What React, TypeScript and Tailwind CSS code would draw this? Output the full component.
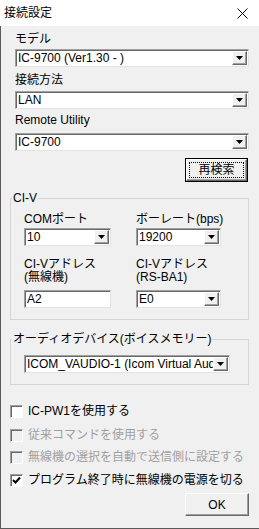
import React from 'react';

// Sunken combo box with a small raised drop button on the right
function DropBtn() {
  return (
    <div className="w-[15px] h-[14px] mr-[1px] flex items-center justify-center bg-[#f0f0f0] border border-t-white border-l-white border-r-[#696969] border-b-[#696969] shadow-[inset_-1px_-1px_0_#a0a0a0] flex-shrink-0">
      <svg width="7" height="4" viewBox="0 0 7 4">
        <polygon points="0,0 7,0 3.5,4" fill="#000" />
      </svg>
    </div>
  );
}

function Combo({ value, className = '' }: { value: string; className?: string }) {
  return (
    <div
      className={`flex h-[18px] items-center bg-white border border-t-[#a0a0a0] border-l-[#a0a0a0] border-r-[#e3e3e3] border-b-[#e3e3e3] shadow-[inset_1px_1px_0_#696969] ${className}`}
    >
      <span className="flex-1 pl-[2px] whitespace-nowrap overflow-hidden leading-[16px]">{value}</span>
      <DropBtn />
    </div>
  );
}

function Edit({ value, className = '' }: { value: string; className?: string }) {
  return (
    <div
      className={`flex h-[18px] items-center bg-white border border-t-[#a0a0a0] border-l-[#a0a0a0] border-r-[#e3e3e3] border-b-[#e3e3e3] shadow-[inset_1px_1px_0_#696969] ${className}`}
    >
      <span className="pl-[2px] leading-[16px]">{value}</span>
    </div>
  );
}

function Check({ label, checked = false, disabled = false, className = '' }: { label: string; checked?: boolean; disabled?: boolean; className?: string }) {
  return (
    <div className={`flex items-center h-[14px] ${className}`}>
      <div
        className={`w-[13px] h-[13px] flex items-center justify-center border border-t-[#a0a0a0] border-l-[#a0a0a0] border-r-white border-b-white shadow-[inset_1px_1px_0_#696969] ${disabled ? 'bg-[#f0f0f0]' : 'bg-white'}`}
      >
        {checked && (
          <svg width="9" height="9" viewBox="0 0 9 9">
            <path d="M1 4 L3.5 6.5 L8 1.5" stroke="#000" strokeWidth="2" fill="none" />
          </svg>
        )}
      </div>
      <span className={`ml-[5px] leading-[14px] whitespace-nowrap ${disabled ? 'text-[#a0a0a0]' : 'text-black'}`}>{label}</span>
    </div>
  );
}

export default function App() {
  return (
    <div
      className="w-[259px] h-[529px] flex flex-col text-[12px] text-black bg-[#f0f0f0] overflow-hidden"
      style={{ fontFamily: '"Liberation Sans", "Noto Sans CJK JP", sans-serif' }}
    >
      {/* Title bar */}
      <div className="h-[26px] bg-white flex items-center justify-between pl-[4px] pr-[11px] flex-shrink-0">
        <span className="leading-[14px]">接続設定</span>
        <svg width="11" height="11" viewBox="0 0 11 11">
          <path d="M0.5 0.5 L10.5 10.5 M10.5 0.5 L0.5 10.5" stroke="#000" strokeWidth="1" />
        </svg>
      </div>

      {/* Body */}
      <div className="flex-1 flex flex-col pl-[9px] pr-[10px] border-l border-b border-[#5a5a5a]">
        <div className="ml-[5px] mt-[6px] leading-[14px]">モデル</div>
        <Combo className="ml-[5px] mt-[3px]" value="IC-9700 (Ver1.30 - )" />
        <div className="ml-[5px] mt-[6px] leading-[14px]">接続方法</div>
        <Combo className="ml-[5px] mt-[4px]" value="LAN" />
        <div className="ml-[5px] mt-[4px] leading-[14px]">Remote Utility</div>
        <Combo className="ml-[5px] mt-[6px]" value="IC-9700" />

        <button
          type="button"
          className="self-end mt-[7px] mr-[1px] w-[63px] h-[24px] border border-black bg-[#f0f0f0] p-0"
        >
          <div className="w-full h-full border border-t-white border-l-white border-r-[#696969] border-b-[#696969] shadow-[inset_-1px_-1px_0_#a0a0a0] p-[2px]">
            <div className="w-full h-full flex items-center justify-center border border-dotted border-black leading-[14px]">
              再検索
            </div>
          </div>
        </button>

        {/* CI-V group */}
        <fieldset className="mt-[9px] border border-[#d5d5d5] pl-[1px] pr-0 pb-[11px]">
          <legend className="px-[1px] leading-[14px]">CI-V</legend>
          <div className="grid grid-cols-[87px_85px] gap-x-[25px] pl-[12px]">
            <div className="mt-[7px] leading-[14px] whitespace-nowrap">COMポート</div>
            <div className="mt-[7px] leading-[14px] whitespace-nowrap">ボーレート(bps)</div>
            <Combo className="mt-[2px]" value="10" />
            <Combo className="mt-[2px]" value="19200" />
            <div className="mt-[12px] leading-[13px] whitespace-nowrap">
              CI-Vアドレス
              <br />
              (無線機)
            </div>
            <div className="mt-[12px] leading-[13px] whitespace-nowrap">
              CI-Vアドレス
              <br />
              (RS-BA1)
            </div>
            <Edit className="mt-[6px]" value="A2" />
            <Combo className="mt-[6px]" value="E0" />
          </div>
        </fieldset>

        {/* Audio group */}
        <fieldset className="mt-[12px] border border-[#d5d5d5] pl-[1px] pr-0 pb-[11px]">
          <legend className="px-[1px] leading-[14px] whitespace-nowrap">オーディオデバイス(ボイスメモリー)</legend>
          <div className="pl-[12px]">
            <Combo className="mt-[9px] w-[206px]" value="ICOM_VAUDIO-1 (Icom Virtual Aud" />
          </div>
        </fieldset>

        <Check className="mt-[19px]" label="IC-PW1を使用する" />
        <Check className="mt-[10px]" label="従来コマンドを使用する" disabled />
        <Check className="mt-[8px]" label="無線機の選択を自動で送信側に設定する" disabled />
        <Check className="mt-[9px]" label="プログラム終了時に無線機の電源を切る" checked />

        <button
          type="button"
          className="self-end mt-[6px] w-[64px] h-[23px] bg-[#f0f0f0] border border-t-white border-l-white border-r-[#696969] border-b-[#696969] shadow-[inset_-1px_-1px_0_#a0a0a0] leading-[14px] p-0"
        >
          OK
        </button>
      </div>
    </div>
  );
}
